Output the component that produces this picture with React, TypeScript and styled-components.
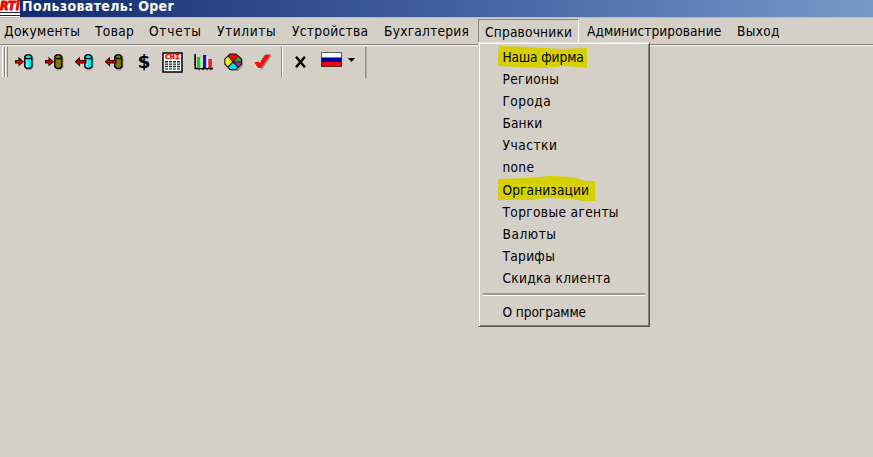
import React from "react";
import styled, { createGlobalStyle } from "styled-components";

const face = "#d4cfc7";

const GlobalStyle = createGlobalStyle`
  html, body { margin: 0; background: ${face}; overflow: hidden; }
  * { box-sizing: border-box; }
`;

const Window = styled.div`
  width: 873px;
  height: 457px;
  display: flex;
  flex-direction: column;
  background: ${face};
  color: #000;
  font: 13.6px "DejaVu Sans Condensed", "DejaVu Sans", sans-serif;
  font-stretch: condensed;
  overflow: hidden;
`;

const TitleBar = styled.header`
  display: flex;
  height: 18px;
  flex: none;
  background: linear-gradient(90deg, #10296d 0%, #496aa5 60%, #7799c8 100%);
  border-bottom: 1px solid #b4bac6;
`;

const TitleText = styled.span`
  margin: -2px 0 0 2px;
  color: #fff;
  font-size: 14px;
  font-weight: bold;
  line-height: 17px;
  letter-spacing: 0.35px;
  white-space: nowrap;
`;

const Logo = styled.svg`
  display: block;
  flex: none;
`;

const MenuBar = styled.nav`
  display: flex;
  flex: none;
  height: 28px;
  border-bottom: 1px solid #f4f2ee;
  box-shadow: inset 0 -1px 0 #85827e;
`;

const MenuButton = styled.div<{ $w: number; $track: number; $open?: boolean }>`
  position: relative;
  width: ${(p) => p.$w}px;
  height: 24px;
  margin-top: 1px;
  padding-left: ${(p) => (p.$open ? 6 : 4)}px;
  padding-top: ${(p) => (p.$open ? 1 : 0)}px;
  line-height: 22px;
  letter-spacing: ${(p) => p.$track}px;
  white-space: nowrap;
  border: solid transparent;
  border-width: 1px 0 0 0;
  ${(p) =>
    p.$open &&
    `margin-right: 4px; border: 1px solid; border-color: #85827e #fff #fff #85827e;`}
`;

const Dropdown = styled.div`
  position: absolute;
  z-index: 2;
  left: -1px;
  top: 22px;
  width: 172px;
  height: 285px;
  padding: 3px 3px 0 3px;
  background: ${face};
  border: 1px solid;
  border-color: #e6e3de #55534f #55534f ${face};
  box-shadow: inset 1px 1px 0 #fff, inset -1px -1px 0 #85827e;
`;

const MenuItem = styled.div<{ $track: number }>`
  position: relative;
  height: 22.1px;
  padding-left: 20.5px;
  line-height: 22px;
  letter-spacing: ${(p) => p.$track}px;
  white-space: nowrap;
`;

const ItemText = styled.span`
  position: relative;
`;

const Marker = styled.svg`
  position: absolute;
  left: 16px;
  top: -1px;
  overflow: visible;
`;

const Divider = styled.hr`
  height: 3px;
  margin: 4px 1px 5px;
  border: 0;
  border-top: 2px solid #99958f;
  border-bottom: 1px solid #fff;
`;

const ToolBar = styled.div`
  display: flex;
  align-items: center;
  height: 32px;
  flex: none;
  padding-left: 2px;
`;

const Grip = styled.i`
  width: 3px;
  height: 30px;
  background: linear-gradient(90deg, #fff 0 1px, #d4cfc7 1px 2px, #8b8883 2px 3px);
`;

const Tool = styled.svg<{ $gap: number; $lift?: number }>`
  display: block;
  flex: none;
  overflow: visible;
  margin-left: ${(p) => p.$gap}px;
  margin-bottom: ${(p) => p.$lift ?? 0}px;
`;

const Rule = styled.i<{ $gap: number; $lit?: boolean }>`
  width: 2px;
  height: 31px;
  margin-left: ${(p) => p.$gap}px;
  background: linear-gradient(90deg, #928f8a 0 1px, ${(p) => (p.$lit ? "#fff" : "#b5b1ab")} 1px 2px);
`;

const topMenus: Array<[string, number, number]> = [
  ["Документы", 91, 0.35],
  ["Товар", 54, 0.35],
  ["Отчеты", 68, 0.75],
  ["Утилиты", 75, 0.6],
  ["Устройства", 92, 0.33],
  ["Бухгалтерия", 98, 0.26],
  ["Справочники", 101, 0.2],
  ["Администрирование", 150, 0.08],
  ["Выход", 60, 0.3],
];

const entries: Array<[string, number]> = [
  ["Наша фирма", -0.1],
  ["Регионы", 0.35],
  ["Города", 0.4],
  ["Банки", 0.1],
  ["Участки", 0.5],
  ["none", 0.3],
  ["Организации", 0.1],
  ["Торговые агенты", 0.35],
  ["Валюты", 0.55],
  ["Тарифы", 0.3],
  ["Скидка клиента", 0.27],
];

const markers: Record<string, string> = {
  "Наша фирма": "M1 1 L30 2 L62 4 L89 3 V23 L66 21 L46 23 L22 22 L0 21 V9 Z",
  "Организации": "M0 1 L28 0 L52 -2 L74 -1 L88 3 L97 3 V23 L84 23 L76 21 L48 20 L34 22 L0 22 Z",
};

const Cylinder = ({ fill, out, gap }: { fill: string; out?: boolean; gap: number }) => (
  <Tool $gap={gap} width="19" height="17" viewBox="0 0 19 17">
    <path d="M17.8 3.5 V13 L15.5 15.6 H11.5" fill="none" stroke="#99958f" strokeWidth="1.4" />
    <path d="M9.8 2.5 L11.5 0.9 H15 L16.8 2.5 V12.6 L15 14.4 H11.5 L9.8 12.6 Z" fill={fill} stroke="#000" strokeWidth="1.4" />
    <path d="M10 3.2 L11.5 4.6 H15 L16.5 3.2" fill="none" stroke="#000" strokeWidth="1.1" />
    {fill === "#00f0f4" && <path d="M12 6 V13" stroke="#b8ffff" />}
    {out ? (
      <path d="M0.5 7.7 L4.5 4 V6.5 H11 V9 H4.5 V11.4 Z" fill="#e00000" stroke="#3a0000" strokeWidth="1.1" />
    ) : (
      <path d="M0.5 6.5 H4 V4 L8.2 7.7 L4 11.4 V9 H0.5 Z" fill="#e00000" stroke="#3a0000" strokeWidth="1.1" />
    )}
  </Tool>
);

const DollarSign = styled.span`
  width: 16px;
  margin-left: 12px;
  text-align: center;
  font: bold 18px/20px "DejaVu Sans Mono", monospace;
  transform: scaleX(1.25);
`;

const Report = () => (
  <Tool $gap={10} width="21" height="21" viewBox="0 0 21 21">
    <rect x="1" y="1" width="19" height="19" fill="#fff" stroke="#000" strokeWidth="1.5" />
    <text x="2.8" y="7.4" fill="#f00000" stroke="#f00000" strokeWidth="0.3" fontFamily="DejaVu Sans Mono" fontWeight="bold" fontSize="6.8" textLength="15.2" lengthAdjust="spacingAndGlyphs">CHI</text>
    <path d="M3 9.7 H18 M3 12.1 H18 M3 14.5 H18" stroke="#222" strokeWidth="1.4" strokeDasharray="3 1" />
    <path d="M3 17.1 H18" stroke="#188030" strokeWidth="1.5" strokeDasharray="3 1" />
  </Tool>
);

const Bars = () => (
  <Tool $gap={11} width="19" height="18" viewBox="0 0 19 18">
    <path d="M1.2 1 V15.6 H19" fill="none" stroke="#000" strokeWidth="1.5" />
    <path d="M0 3 H2 M0 6 H2 M0 9 H2 M0 12 H2 M5 17.3 V15 M9 17.3 V15 M13 17.3 V15 M17 17.3 V15" stroke="#000" />
    <rect x="3" y="4" width="3.6" height="11" fill="#00e000" />
    <rect x="6.6" y="5" width="1.4" height="10" fill="#f4f4f4" />
    <rect x="9" y="2" width="3.4" height="13" fill="#1010e8" />
    <rect x="12.4" y="3" width="1.3" height="12" fill="#f4f4f4" />
    <rect x="14.4" y="6" width="3.4" height="9" fill="#f01818" />
  </Tool>
);

const Pie = () => (
  <Tool $gap={11} width="19" height="18" viewBox="0 0 19 18">
    <path d="M7 2 H14 L19 7 V13 L14 18 H7 L2 13 V7 Z" fill="#99958f" />
    <path d="M6 1 H12 L17.5 6 V11 L12 16.5 H6 L0.8 11 V6 Z" fill="#fff000" />
    <path d="M9 9 L4 2 L6 1 H12 L14 2.5 Z" fill="#f00000" />
    <path d="M9 9 L14 3 L17.5 6 V9 Z" fill="#10b820" />
    <path d="M9 9 H17.5 V11 L14 14 Z" fill="#e000e8" />
    <path d="M9 9 L14 14.5 L12 16.5 H6 L3.5 14 Z" fill="#00e8f0" />
    <path d="M6 1 H12 L17.5 6 V11 L12 16.5 H6 L0.8 11 V6 Z M9 9 L4 3 M9 9 L14 3 M9 9 H17 M9 9 L14 14 M9 9 L4 14" fill="none" stroke="#151515" strokeWidth="1.1" />
  </Tool>
);

const Check = () => (
  <Tool $gap={10} width="19" height="18" viewBox="0 0 19 18">
    <path d="M2 11 L6 10 L8 11 L14 2.5 H18.5 L9 16.5 H6 Z" fill="#8d8984" />
    <path d="M1 9.5 L5.5 8.5 L7 10 L12.5 1.5 H17.5 L8 15 H5 Z" fill="#ff0d0d" />
    <path d="M0.5 9.5 L5 15.8 H8" fill="none" stroke="#f2eeea" strokeWidth="0.9" />
    <path d="M8 8 L12 2" stroke="#5a2420" strokeWidth="0.8" strokeDasharray="1.2 1" />
  </Tool>
);

const Cross = () => (
  <Tool $gap={11} width="13" height="12" viewBox="0 0 13 12">
    <path d="M2 0.8 L11 11.2 M11 0.8 L2 11.2" stroke="#000" strokeWidth="2.5" />
  </Tool>
);

const Flag = () => (
  <Tool $gap={14} $lift={5} width="21" height="15" viewBox="0 0 21 15">
    <rect width="21" height="5.5" fill="#fff" />
    <rect y="5.5" width="21" height="4.5" fill="#0000a8" />
    <rect y="10" width="21" height="5" fill="#f40000" />
    <rect x="0.5" y="0.5" width="20" height="14" fill="none" stroke="#333" strokeOpacity="0.8" />
  </Tool>
);

const Caret = () => (
  <Tool $gap={6} $lift={4} width="7" height="4" viewBox="0 0 7 4">
    <path d="M0 0 H7 L3.5 4 Z" fill="#000" />
  </Tool>
);

export default function App() {
  return (
    <Window>
      <GlobalStyle />
      <TitleBar>
        <Logo width="20" height="17" viewBox="0 0 20 17">
          <rect width="20" height="17" fill="#fff" />
          <text x="0" y="10" fill="#f00000" stroke="#f00000" strokeWidth="0.9" fontFamily="DejaVu Sans" fontWeight="bold" fontStyle="italic" fontSize="13" textLength="19.5" lengthAdjust="spacingAndGlyphs">RTi</text>
          <path d="M0 12.5 H20 M0 15.5 H20" stroke="#222" strokeWidth="1" />
        </Logo>
        <TitleText>Пользователь: Oper</TitleText>
      </TitleBar>
      <MenuBar>
        {topMenus.map(([label, w, track]) => {
          const open = label === "Справочники";
          return (
            <MenuButton key={label} $w={w} $track={track} $open={open}>
              {label}
              {open && (
                <Dropdown>
                  {entries.map(([text, t]) => (
                    <MenuItem key={text} $track={t}>
                      {markers[text] && (
                        <Marker width="97" height="23">
                          <path d={markers[text]} fill="#d6d000" />
                        </Marker>
                      )}
                      <ItemText>{text}</ItemText>
                    </MenuItem>
                  ))}
                  <Divider />
                  <MenuItem $track={-0.08}>О программе</MenuItem>
                </Dropdown>
              )}
            </MenuButton>
          );
        })}
      </MenuBar>
      <ToolBar>
        <Grip />
        <Grip />
        <Cylinder gap={7} fill="#00f0f4" />
        <Cylinder gap={11} fill="#807800" />
        <Cylinder gap={11} fill="#00f0f4" out />
        <Cylinder gap={11} fill="#807800" out />
        <DollarSign>$</DollarSign>
        <Report />
        <Bars />
        <Pie />
        <Check />
        <Rule $gap={9} $lit />
        <Cross />
        <Flag />
        <Caret />
        <Rule $gap={10} />
      </ToolBar>
    </Window>
  );
}
